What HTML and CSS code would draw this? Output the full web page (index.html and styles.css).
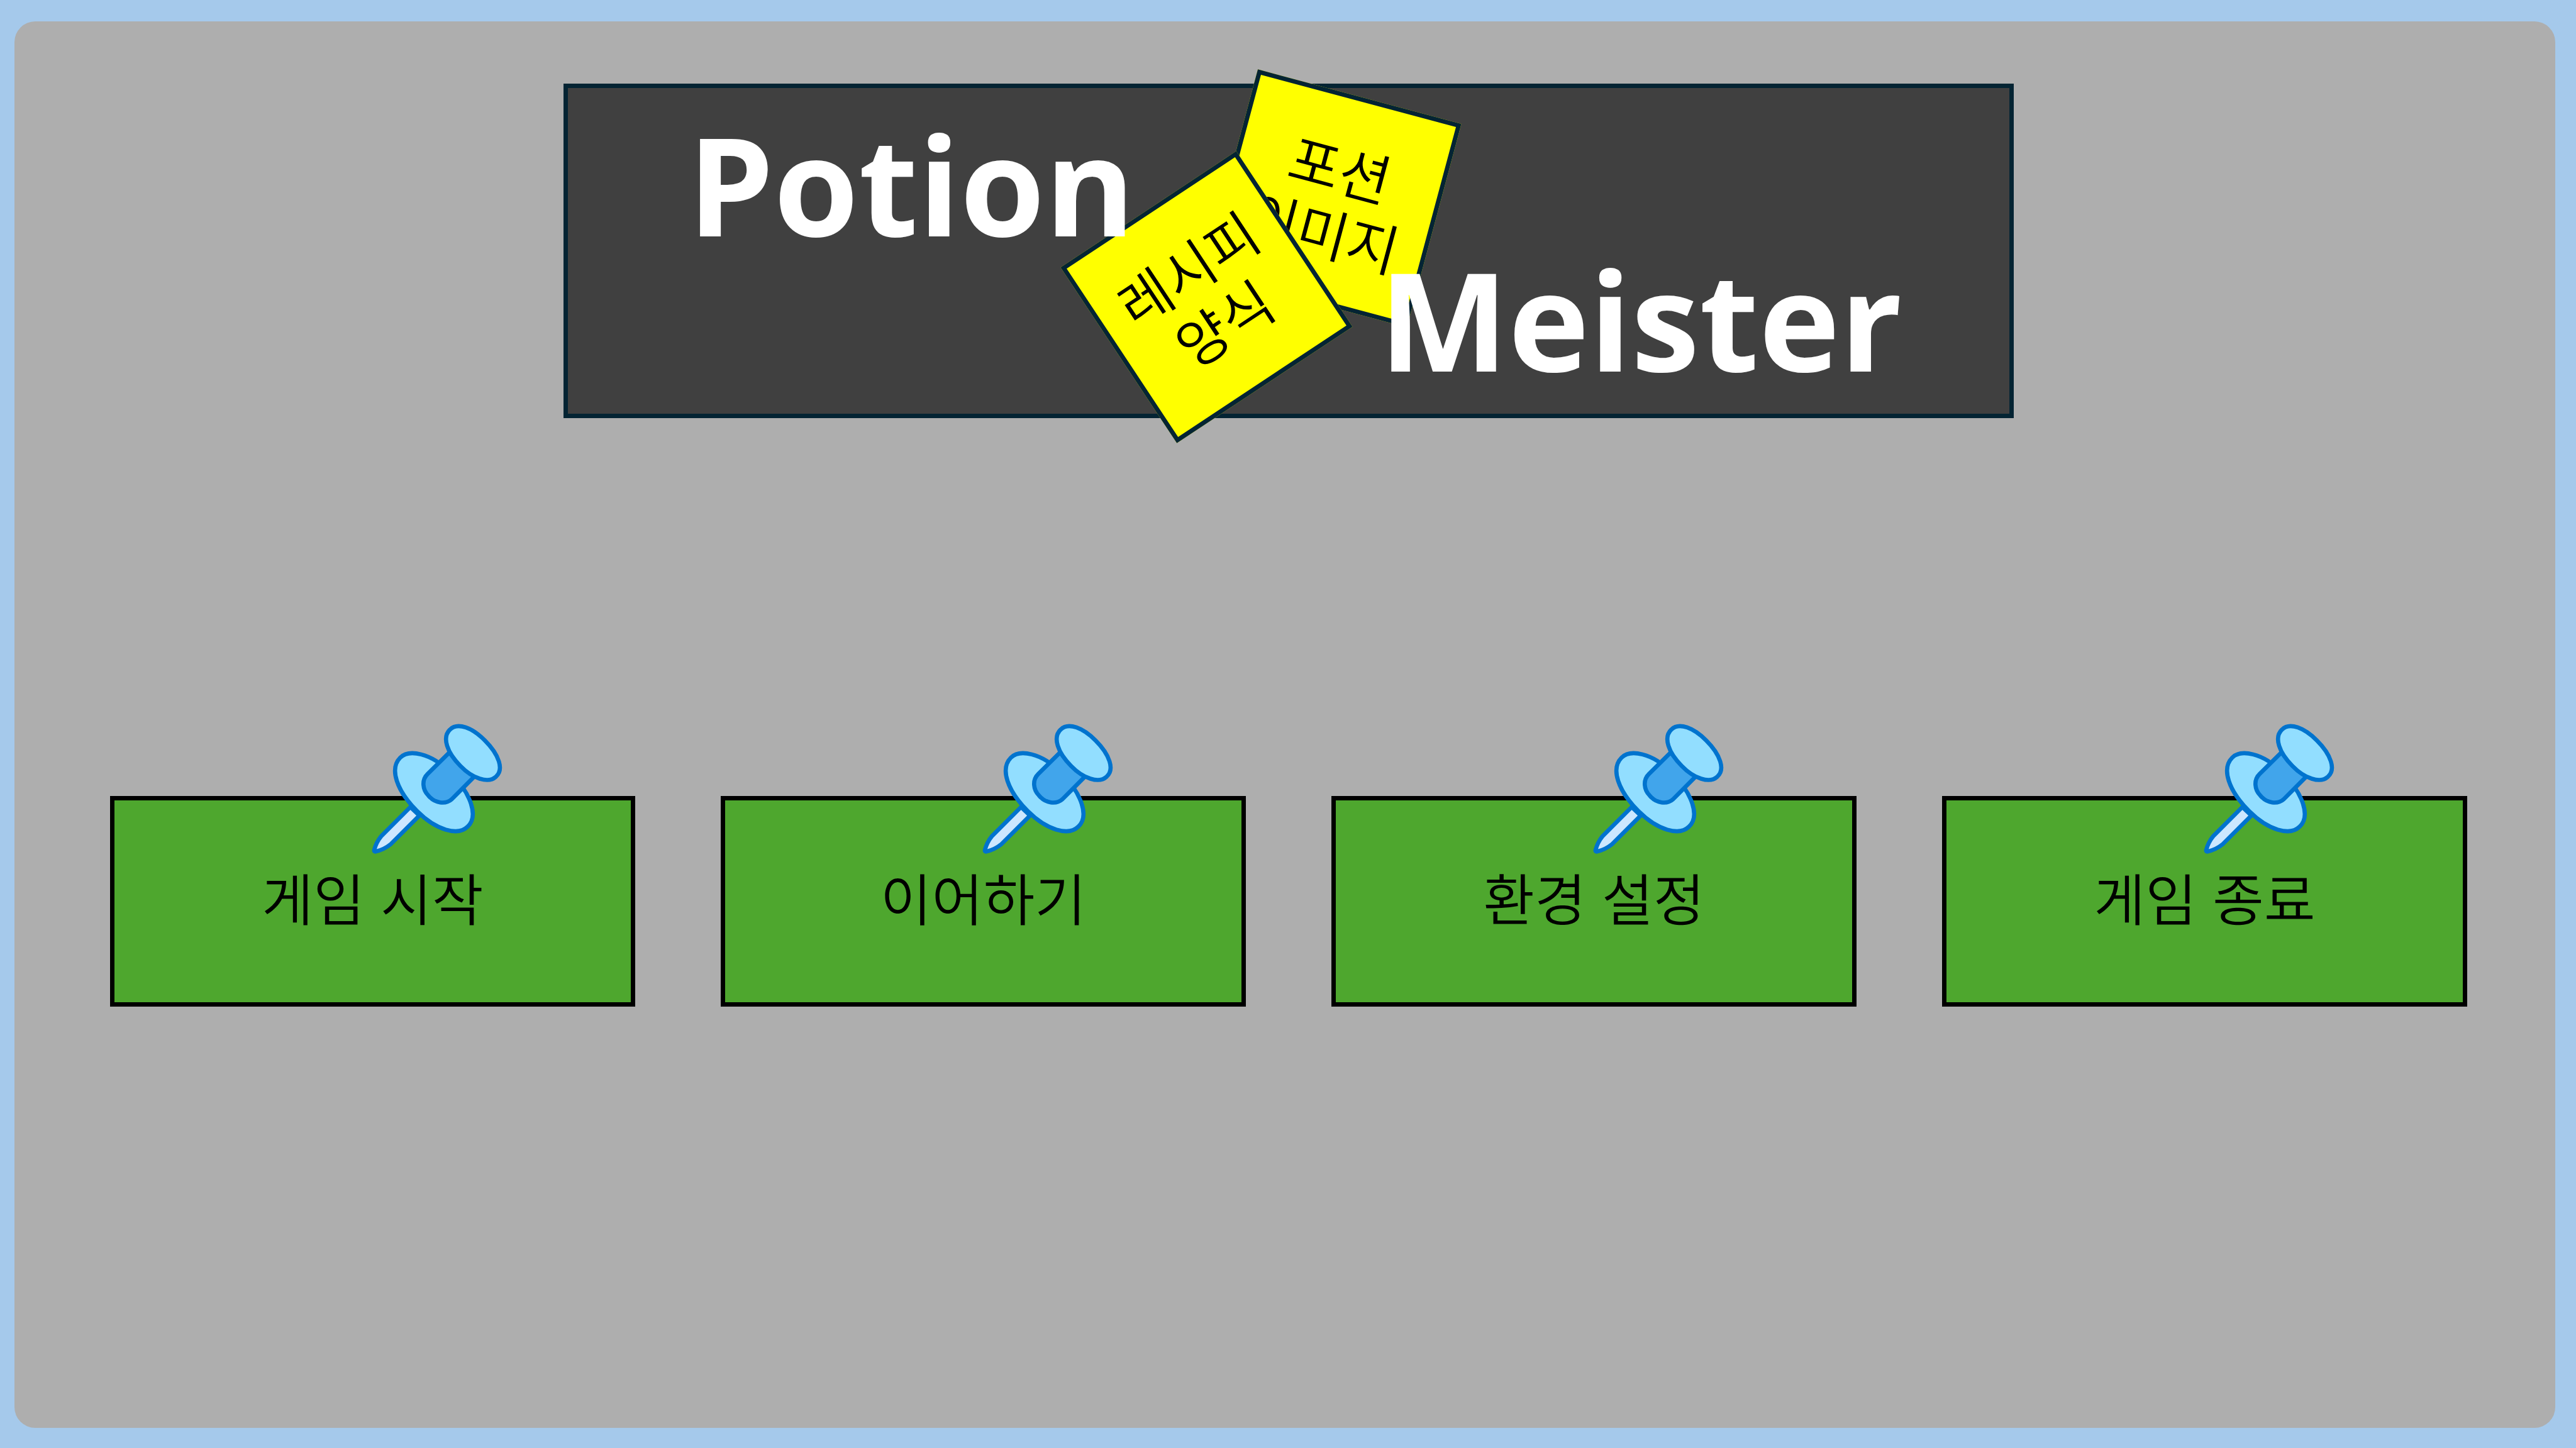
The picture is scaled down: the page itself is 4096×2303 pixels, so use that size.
FILE: index.html
```html
<!DOCTYPE html>
<html lang="ko">
<head>
<meta charset="utf-8">
<meta name="viewport" content="width=device-width, initial-scale=1">
<title>Potion Meister</title>
<link rel="stylesheet" href="styles.css">
</head>
<body>
<svg class="sprite" aria-hidden="true">
  <symbol id="pin" viewBox="100 80 640 640">
    <g stroke="#0073ce" stroke-width="20" stroke-linejoin="round">
      <path fill="#cce7ff" d="M292 489 L152 629 Q128 658 118 696 Q116 704 125 703 Q165 694 197 668 L335 530 Z"/>
      <path fill="#92deff" d="M243 252 C285 210 390 230 480 320 C585 425 620 535 566 584 C520 630 415 600 325 510 C225 410 190 305 243 252 Z"/>
      <path fill="#41a5eb" d="M478 228 L374 331 C345 360 350 405 378 434 C410 472 460 478 490 452 L598 344 Z"/>
      <path fill="#92deff" d="M482 117 C520 80 590 110 650 170 C718 238 742 310 702 344 C665 378 590 352 532 292 C468 228 442 155 482 117 Z"/>
    </g>
  </symbol>
</svg>
<main class="board">
  <header class="banner">
    <div class="note note-potion">포션<br>이미지</div>
    <div class="note note-recipe">레시피<br>양식</div>
    <h1 class="title"><span class="word-first">Potion</span> <span class="word-second">Meister</span></h1>
  </header>
  <nav class="menu">
    <button class="menu-button" type="button">게임 시작<svg class="pin" aria-hidden="true"><use href="#pin"/></svg></button>
    <button class="menu-button" type="button">이어하기<svg class="pin" aria-hidden="true"><use href="#pin"/></svg></button>
    <button class="menu-button" type="button">환경 설정<svg class="pin" aria-hidden="true"><use href="#pin"/></svg></button>
    <button class="menu-button" type="button">게임 종료<svg class="pin" aria-hidden="true"><use href="#pin"/></svg></button>
  </nav>
</main>
</body>
</html>
```
FILE: styles.css
```css
* {
  box-sizing: border-box;
}

body {
  margin: 0;
  min-height: 100vh;
  padding: 34px 33px 32px 23px;
  display: flex;
  background: #a5c9eb;
  color: #000;
  font-family: "Noto Sans CJK KR", sans-serif;
  font-weight: 350;
}

.sprite {
  position: absolute;
  width: 0;
  height: 0;
}

.board {
  flex: 1;
  padding: 99px 140px 140px 152px;
  border-radius: 33px;
  background: #aeaeae;
}

.banner {
  position: relative;
  width: 61.5%;
  margin: 0 auto;
  padding: 44px 170px 44px 190px;
  border: 7px solid #042433;
  background: #404040;
}

.title {
  position: relative;
  display: flex;
  flex-direction: column;
  margin: 0;
  color: #fff;
  font-family: "Open Sans", sans-serif;
  font-size: 218px;
  font-weight: 700;
  line-height: 215px;
}

.word-second {
  align-self: flex-end;
}

.note {
  position: absolute;
  width: 335px;
  height: 335px;
  display: flex;
  align-items: center;
  justify-content: center;
  border: 7px solid #042433;
  background: #ff0;
  font-size: 89px;
  line-height: 104px;
  text-align: center;
  white-space: nowrap;
}

.note-potion {
  left: calc(50% - 98px);
  top: 8px;
  transform: rotate(15deg);
}

.note-recipe {
  left: calc(50% - 298px);
  top: 165px;
  padding-bottom: 10px;
  transform: rotate(-33.5deg);
}

.menu {
  display: grid;
  grid-template-columns: repeat(4, 1fr);
  gap: 136px;
  margin-top: 601px;
}

.menu-button {
  position: relative;
  height: 335px;
  padding: 0 0 16px;
  border: 7px solid #000;
  border-radius: 0;
  background: #4ea72e;
  color: #000;
  font: inherit;
  font-size: 89px;
  line-height: 120px;
  cursor: pointer;
}

.pin {
  position: absolute;
  right: 202px;
  top: -125px;
  width: 212px;
  height: 212px;
}
```
